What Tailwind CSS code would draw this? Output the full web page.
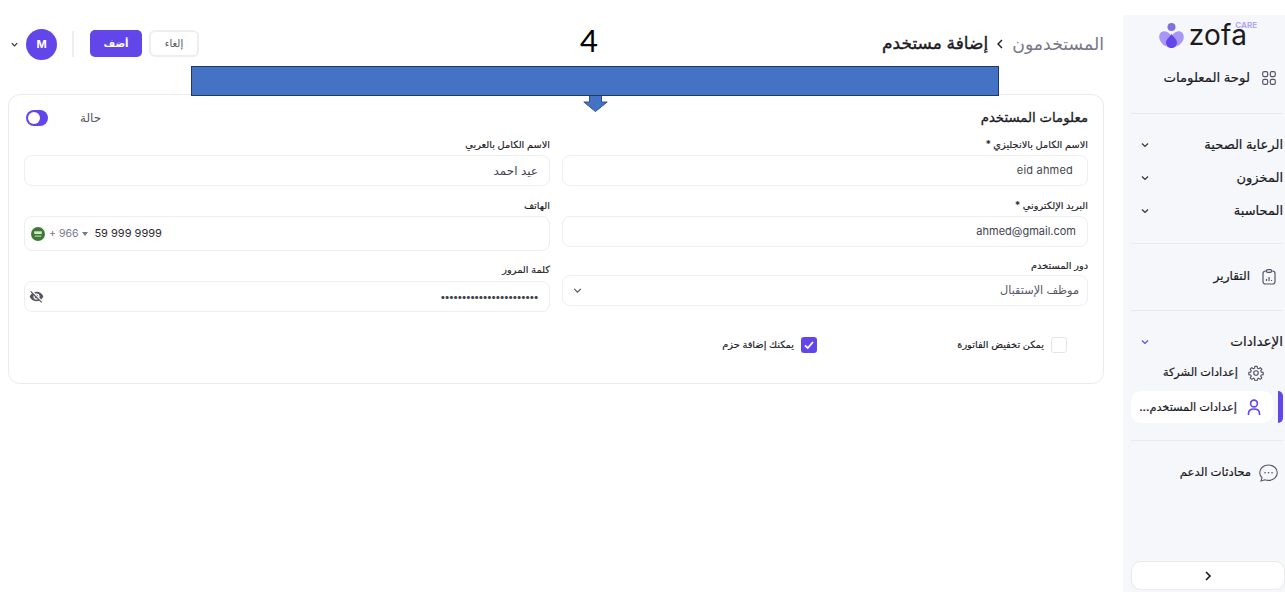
<!DOCTYPE html>
<html lang="ar" dir="rtl">
<head>
  <meta charset="UTF-8" />
  <title>إضافة مستخدم</title>
  <script src="https://cdn.jsdelivr.net/npm/@tailwindcss/browser@4"></script>
</head>
<body class="relative w-[1285px] h-[596px] overflow-hidden bg-white text-[#1b1b1f] font-['Inter','DejaVu_Sans',sans-serif]">
  <div class="flex items-start">

    <!-- sidebar -->
    <aside class="w-[162px] h-[577px] mt-[15px] bg-[#f6f7fb] shrink-0 pr-[2px] flex flex-col">
      <div class="h-[40px] pt-[6px] flex justify-center" dir="ltr">
        <div class="flex items-center h-[28px] relative">
          <svg class="w-[25px] h-[27px]" viewBox="0 0 25 26">
            <circle cx="12.5" cy="4.5" r="4" fill="#8170e0"/>
            <path d="M0.2 14.500 C0.2 8 7.500 6.500 12 13 C10 16 7 19 7.500 24 C3 22 0.2 18 0.2 14.500Z" fill="#a897f7"/>
            <path d="M24.800 14.500 C24.800 8 17.500 6.500 13 13 C15 16 18 19 17.500 24 C22 22 24.800 18 24.800 14.500Z" fill="#a897f7"/>
            <path d="M12.5 11.500 C15 15 18 17 18 20.500 C18 23.500 15.500 25.500 12.5 25.500 C9.500 25.500 7 23.500 7 20.500 C7 17 10 15 12.5 11.500Z" fill="#6246ea"/>
          </svg>
          <span class="ml-[5px] text-[28px] leading-[28px] font-normal tracking-[0.2px] text-[#1b1b1f] font-['Inter',sans-serif]">zofa</span>
          <span class="absolute right-[-10px] top-[0px] text-[8px] leading-[8px] font-bold text-[#b3a6f8] font-['Inter',sans-serif]">CARE</span>
        </div>
      </div>
      <div class="h-[46px] flex items-center pr-[7px] gap-[12px]">
        <svg class="w-[14px] h-[14px] text-[#56566a]" viewBox="0 0 14 14" fill="none" stroke="currentColor" stroke-width="1.2">
          <rect x="0.7" y="0.7" width="5" height="5" rx="1.6"/><rect x="8.3" y="0.7" width="5" height="5" rx="1.6"/>
          <rect x="0.7" y="8.3" width="5" height="5" rx="1.6"/><rect x="8.3" y="8.3" width="5" height="5" rx="1.6"/>
        </svg>
        <span class="text-[13.3px] font-medium [-webkit-text-stroke:0.2px]">لوحة المعلومات</span>
      </div>
      <div class="h-px bg-[#e9e9ee] ml-[8px] mt-[12px]"></div>
      <div class="h-[33px] mt-[14px] flex items-center justify-between pl-[17px]">
        <span class="text-[13px] font-medium [-webkit-text-stroke:0.2px]">الرعاية الصحية</span>
        <svg class="w-[10px] h-[10px]" viewBox="0 0 10 10" fill="none" stroke="#333" stroke-width="1.2"><path d="M2 3.5 5 6.5 8 3.5"/></svg>
      </div>
      <div class="h-[33px] flex items-center justify-between pl-[17px]">
        <span class="text-[13px] font-medium [-webkit-text-stroke:0.2px]">المخزون</span>
        <svg class="w-[10px] h-[10px]" viewBox="0 0 10 10" fill="none" stroke="#333" stroke-width="1.2"><path d="M2 3.5 5 6.5 8 3.5"/></svg>
      </div>
      <div class="h-[33px] flex items-center justify-between pl-[17px]">
        <span class="text-[13px] font-medium [-webkit-text-stroke:0.2px]">المحاسبة</span>
        <svg class="w-[10px] h-[10px]" viewBox="0 0 10 10" fill="none" stroke="#333" stroke-width="1.2"><path d="M2 3.5 5 6.5 8 3.5"/></svg>
      </div>
      <div class="h-px bg-[#e9e9ee] ml-[8px] mt-[16px]"></div>
      <div class="h-[33px] mt-[16px] flex items-center pr-[7px] gap-[12px]">
        <svg class="w-[14px] h-[16px]" viewBox="0 0 14 16" fill="none" stroke="#56566a" stroke-width="1.2">
          <rect x="1" y="2" width="12" height="13" rx="2.5"/><rect x="4.5" y="0.7" width="5" height="2.6" rx="1" fill="#f6f7fb"/>
          <path d="M4.5 12v-2M7 12V8M9.5 12v-1"/>
        </svg>
        <span class="text-[12.1px] font-medium [-webkit-text-stroke:0.2px]">التقارير</span>
      </div>
      <div class="h-px bg-[#e9e9ee] ml-[8px] mt-[17px]"></div>
      <div class="h-[33px] mt-[14px] flex items-center justify-between pl-[17px]">
        <span class="text-[13.5px] font-medium [-webkit-text-stroke:0.2px]">الإعدادات</span>
        <svg class="w-[10px] h-[10px]" viewBox="0 0 10 10" fill="none" stroke="#6246ea" stroke-width="1.2"><path d="M2 3.5 5 6.5 8 3.5"/></svg>
      </div>
      <div class="h-[29px] flex items-center pr-[19px] gap-[10px]">
        <svg class="w-[16px] h-[16px]" viewBox="0 0 24 24" fill="none" stroke="#56566a" stroke-width="1.7" stroke-linejoin="round">
          <path d="M10.3 2h3.4l.5 2.9 1.8.8 2.4-1.7 2.4 2.4-1.7 2.4.8 1.8 2.9.5v3.4l-2.9.5-.8 1.8 1.7 2.4-2.4 2.4-2.4-1.7-1.8.8-.5 2.9h-3.4l-.5-2.9-1.8-.8-2.4 1.7-2.4-2.4 1.7-2.4-.8-1.8-2.9-.5v-3.4l2.9-.5.8-1.8-1.7-2.4 2.4-2.4 2.4 1.7 1.8-.8z"/>
          <circle cx="12" cy="12" r="3.4"/>
        </svg>
        <span class="text-[11.3px] font-medium [-webkit-text-stroke:0.2px]">إعدادات الشركة</span>
      </div>
      <div class="h-[32px] mt-[4px] flex items-center">
        <div class="w-[5px] h-[32px] bg-[#6246ea] rounded-r-[5px] ml-[5px] shrink-0"></div>
        <div class="w-[142px] h-[32px] bg-white rounded-[10px] flex items-center pr-[12px] gap-[10px]">
          <svg class="w-[14px] h-[17px]" viewBox="0 0 14 17" fill="none" stroke="#6246ea" stroke-width="1.6">
            <circle cx="7" cy="4.5" r="3.4"/><path d="M1.5 16v-1.5C1.5 11.5 3.5 10 7 10s5.500 1.500 5.500 4.500V16"/>
          </svg>
          <span class="text-[11.3px] font-medium whitespace-nowrap [-webkit-text-stroke:0.2px]">إعدادات المستخدم...</span>
        </div>
      </div>
      <div class="h-px bg-[#e9e9ee] ml-[8px] mt-[17px]"></div>
      <div class="h-[33px] mt-[15px] flex items-center pr-[5px] gap-[8px]">
        <svg class="w-[19px] h-[18px]" viewBox="0 0 19 18" fill="none" stroke="#56566a" stroke-width="1.1">
          <path d="M9.500 1C14.500 1 18.300 4.500 18.300 8.700S14.500 16.400 9.500 16.400c-1.300 0-2.500-.2-3.600-.6L2 17l1-3.300C1.600 12.300.7 10.600.7 8.700.7 4.500 4.500 1 9.500 1Z"/>
          <path d="M6 8.700h.1M9.500 8.700h.1M13 8.700h.1" stroke-width="1.600" stroke-linecap="round"/>
        </svg>
        <span class="text-[11.7px] font-medium [-webkit-text-stroke:0.2px]">محادثات الدعم</span>
      </div>
      <div class="mt-auto mb-[2px] -mr-[2px] ml-[8px] h-[29px] bg-white border border-[#e9e9ee] rounded-[10px] flex items-center justify-center">
        <svg class="w-[12px] h-[12px]" viewBox="0 0 12 12" fill="none" stroke="#1b1b1f" stroke-width="1.6"><path d="M4 2l4 4-4 4"/></svg>
      </div>
    </aside>

    <!-- main -->
    <main class="w-[1096px] mr-[19px] shrink-0">
      <header class="h-[94px] pt-[29px] flex items-start justify-between">
        <div class="flex items-center h-[30px] gap-[5px]">
          <span class="text-[17.3px] text-[#77778a]">المستخدمون</span>
          <svg class="w-[12px] h-[12px] mx-[1px]" viewBox="0 0 12 12" fill="none" stroke="#1b1b1f" stroke-width="1.4"><path d="M8 2 4 6l4 4"/></svg>
          <span class="text-[17px] [-webkit-text-stroke:0.4px]">إضافة مستخدم</span>
        </div>
        <div class="flex items-center h-[30px] gap-[6px] ml-[2px]">
          <button class="w-[50px] h-[27px] mb-[2px] ml-[1px] border-2 border-[#eeeef2] rounded-[6px] text-[10px] font-medium text-[#55555f]">إلغاء</button>
          <button class="w-[52px] h-[27px] mb-[2px] bg-[#6246ea] rounded-[5px] text-[10px] font-bold text-white">أضف</button>
          <div class="w-[2px] h-[26px] bg-[#eeeef2] mr-[10px] ml-[9px]"></div>
          <div class="w-[31px] h-[31px] rounded-full bg-[#6246ea] text-white text-[11px] font-bold flex items-center justify-center">M</div>
          <svg class="w-[9px] h-[9px] mr-[1px]" viewBox="0 0 10 10" fill="none" stroke="#333" stroke-width="1.3"><path d="M2 3.500 5 6.500 8 3.500"/></svg>
        </div>
      </header>

      <section class="h-[290px] border border-[#e9e9ee] rounded-[12px] px-[15px] pt-[13px]">
        <div class="flex items-center justify-between h-[20px]">
          <h2 class="text-[13.3px] font-normal [-webkit-text-stroke:0.3px]">معلومات المستخدم</h2>
          <div class="flex items-center gap-[32px] ml-[2px]">
            <span class="text-[12px] text-[#55555f]">حالة</span>
            <div class="w-[22px] h-[16px] bg-[#6246ea] rounded-full flex items-center justify-end px-[2px]">
              <div class="w-[12px] h-[12px] rounded-full bg-white"></div>
            </div>
          </div>
        </div>

        <div class="grid grid-cols-2 gap-x-[12px] mt-[8px]">
          <div>
            <div class="h-[17px] text-[9.8px] leading-[17px] font-medium [-webkit-text-stroke:0.15px]">الاسم الكامل بالانجليزي *</div>
            <div class="h-[31px] mt-[2px] border border-[#eeeef2] rounded-[8px] flex items-center pr-[14px] text-[11px]"><span dir="ltr" class="text-[#44444e] tracking-[0.2px]">eid ahmed</span></div>
            <div class="h-[17px] mt-[11px] text-[9.8px] leading-[17px] font-medium [-webkit-text-stroke:0.15px]">البريد الإلكتروني *</div>
            <div class="h-[31px] mt-[2px] border border-[#eeeef2] rounded-[8px] flex items-center pr-[11px] text-[11px]"><span dir="ltr" class="text-[#44444e]">ahmed@gmail.com</span></div>
            <div class="h-[17px] mt-[10px] text-[9.8px] leading-[17px] font-medium [-webkit-text-stroke:0.15px]">دور المستخدم</div>
            <div class="h-[31px] mt-[1px] border border-[#eeeef2] rounded-[8px] flex items-center justify-between pr-[8px] pl-[9px] text-[11.3px] text-[#55555f]">
              <span>موظف الإستقبال</span>
              <svg class="w-[11px] h-[11px]" viewBox="0 0 10 10" fill="none" stroke="#55555f" stroke-width="1.100"><path d="M2 3.500 5 6.500 8 3.500"/></svg>
            </div>
          </div>
          <div>
            <div class="h-[17px] text-[9.8px] leading-[17px] font-medium [-webkit-text-stroke:0.15px]">الاسم الكامل بالعربي</div>
            <div class="h-[31px] mt-[2px] border border-[#eeeef2] rounded-[8px] flex items-center pr-[11px] text-[12px] text-[#44444e]">عيد احمد</div>
            <div class="h-[17px] mt-[11px] text-[9.8px] leading-[17px] font-medium [-webkit-text-stroke:0.15px]">الهاتف</div>
            <div class="h-[35px] mt-[2px] border border-[#eeeef2] rounded-[8px] flex items-center pl-[6px] text-[11px]" dir="ltr">
              <svg class="w-[14px] h-[14px] mr-[4px]" viewBox="0 0 13 13"><circle cx="6.500" cy="6.500" r="6.500" fill="#3d7a35"/><rect x="3" y="4" width="7" height="2.500" fill="#d8e6d4"/><rect x="3.500" y="8" width="6" height="0.900" fill="#d8e6d4"/></svg>
              <span class="text-[#77778a] text-[10.5px]">+ 966</span>
              <span class="w-0 h-0 ml-[4px] border-x-[3.500px] border-x-transparent border-t-[4px] border-t-[#77778a]"></span>
              <span class="ml-[6px] text-[#2b2b33]">59 999 9999</span>
            </div>
            <div class="h-[17px] mt-[10px] text-[9.8px] leading-[17px] font-medium [-webkit-text-stroke:0.15px]">كلمة المرور</div>
            <div class="h-[31px] mt-[3px] border border-[#eeeef2] rounded-[8px] flex items-center justify-between pr-[11px] pl-[4px] text-[#44444e]">
              <span class="text-[10px] tracking-[-0.5px] font-bold">•••••••••••••••••••••••</span>
              <svg class="w-[15px] h-[15px]" viewBox="0 0 24 24" fill="#55555f"><path d="M12 7a5 5 0 0 1 5 5c0 .6-.1 1.300-.4 1.800l2.900 2.900c1.500-1.300 2.700-2.900 3.500-4.700C21.300 7.600 17 4.500 12 4.500c-1.400 0-2.700.3-4 .7l2.200 2.100c.5-.2 1.200-.3 1.800-.3ZM2 4.300l2.300 2.300.4.400A11.800 11.800 0 0 0 1 12c1.700 4.400 6 7.500 11 7.500 1.600 0 3-.3 4.400-.8l.4.400 2.900 2.900 1.300-1.300L3.300 3 2 4.300Zm5.500 5.500 1.600 1.600-.1.600a3 3 0 0 0 3 3l.6-.1 1.600 1.600A5 5 0 0 1 7.500 9.800Zm4.300-.8 3.200 3.200V12a3 3 0 0 0-3-3h-.2Z"/></svg>
            </div>
          </div>
        </div>

        <div class="flex items-center h-[16px] mt-[25px] pr-[21px]">
          <div class="flex items-center gap-[7px] w-[250px]">
            <div class="w-[16px] h-[16px] border border-[#e4e4ea] rounded-[3px]"></div>
            <span class="text-[9.8px] font-medium [-webkit-text-stroke:0.15px]">يمكن تخفيض الفاتورة</span>
          </div>
          <div class="flex items-center gap-[7px]">
            <div class="w-[16px] h-[16px] bg-[#6246ea] rounded-[3px] flex items-center justify-center">
              <svg class="w-[12px] h-[12px]" viewBox="0 0 12 12" fill="none" stroke="#fff" stroke-width="1.800"><path d="M2 6.500 4.800 9 10 3"/></svg>
            </div>
            <span class="text-[9.8px] font-medium [-webkit-text-stroke:0.15px]">يمكنك إضافة حزم</span>
          </div>
        </div>
      </section>
    </main>
  </div>

  <!-- annotation drawn over the screenshot -->
  <div class="absolute left-[580px] top-[21px] text-[31px] leading-[38px] text-black font-['Lato',sans-serif]">4</div>
  <svg class="absolute left-[583px] top-[95px] w-[25px] h-[17px]" viewBox="0 0 25 17">
    <path d="M6.500 0.500V7H0.800L12.500 16.500 24.200 7H18.500V0.500Z" fill="#4472c4" stroke="#2f528f"/>
  </svg>
  <div class="absolute left-[191px] top-[66px] w-[808px] h-[30px] bg-[#4472c4] border border-[#1f3864]"></div>
</body>
</html>
